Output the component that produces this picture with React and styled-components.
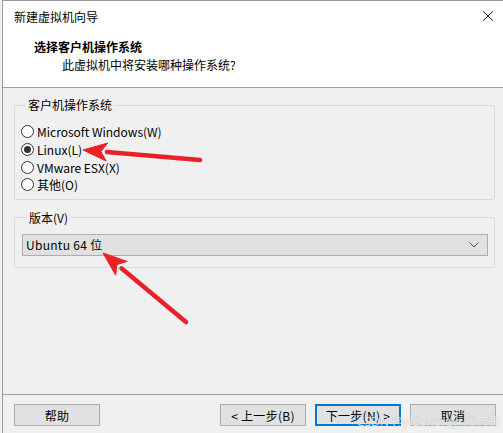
import styled, { createGlobalStyle } from 'styled-components';

const GlobalStyle = createGlobalStyle`
	html, body {
		margin: 0;
		padding: 0;
		background: #f0f0f0;
	}
	body {
		font-family: "Noto Sans CJK SC", "Noto Sans", sans-serif;
		font-size: 12px;
		color: #000;
	}
`;

const Window = styled.div`
	position: relative;
	width: 501px;
	height: 432px;
	margin-left: 2px;
	border-left: 1px solid #9a9a9a;
	border-top: 1px solid #9a9a9a;
	background: #f0f0f0;
	display: flex;
	flex-direction: column;
	overflow: hidden;
`;

const Header = styled.div`
	background: #fff;
	height: 87px;
	border-bottom: 1px solid #a0a0a0;
	display: flex;
	flex-direction: column;
	padding: 5px 0 0 11px;
	box-sizing: border-box;
`;

const TitleBar = styled.div`
	display: flex;
	justify-content: space-between;
	align-items: center;
	height: 20px;
	padding-right: 10px;
`;

const Title = styled.span`
	font-size: 12px;
`;

const Heading = styled.div`
	margin: 12px 0 0 20px;
	font-weight: bold;
	font-size: 12px;
	line-height: 18px;
`;

const Sub = styled.div`
	margin-left: 48px;
	line-height: 17px;
`;

const Body = styled.div`
	flex: 1;
	padding: 9px 9px 0 11px;
	display: flex;
	flex-direction: column;
	gap: 10px;
`;

const Group = styled.fieldset`
	margin: 0;
	border: 1px solid #dcdcdc;
	padding: ${(p) => p.$pad};
	display: flex;
	flex-direction: column;
	box-sizing: border-box;
`;

const Legend = styled.legend`
	padding: 0 2px;
	margin-left: 5px;
	line-height: 16px;
`;

const Radio = styled.label`
	display: flex;
	align-items: center;
	gap: 3px;
	height: 17.7px;
`;

const Dot = styled.span`
	width: 11px;
	height: 11px;
	border: 1px solid #333;
	border-radius: 50%;
	background: #fff;
	display: flex;
	align-items: center;
	justify-content: center;
	&::after {
		content: '';
		width: 7px;
		height: 7px;
		border-radius: 50%;
		background: ${(p) => (p.$on ? '#333' : 'transparent')};
	}
`;

const Select = styled.div`
	height: 22px;
	border: 1px solid #adadad;
	background: #e1e1e1;
	display: flex;
	align-items: center;
	justify-content: space-between;
	padding: 0 8px 0 3px;
	box-sizing: border-box;
	letter-spacing: 0.3px;
`;

const Footer = styled.div`
	height: 39px;
	border-top: 1px solid #a0a0a0;
	display: flex;
	align-items: flex-start;
	padding: 9px 8px 0 11px;
	gap: 9px;
	box-sizing: border-box;
`;

const Button = styled.div`
	width: 86px;
	height: 22px;
	box-sizing: border-box;
	border: ${(p) => (p.$primary ? '2px solid #0078d7' : '1px solid #adadad')};
	background: #e1e1e1;
	display: flex;
	align-items: center;
	justify-content: center;
	letter-spacing: 0.3px;
`;

const Spacer = styled.div`
	flex: 1;
`;

const Overlay = styled.svg`
	position: absolute;
	left: -3px;
	top: -1px;
	pointer-events: none;
`;

const Watermark = styled.div`
	position: absolute;
	right: 4px;
	bottom: 3px;
	color: rgba(255, 255, 255, 0.75);
	text-shadow: 0 0 1px rgba(0, 0, 0, 0.25);
	font-family: "Noto Sans", "Noto Sans CJK SC", sans-serif;
	font-size: 12px;
	pointer-events: none;
`;

const Arrow = ({ x1, y1, x2, y2 }) => {
	const a = Math.atan2(y2 - y1, x2 - x1);
	const len = 24;
	const w = 9;
	const bx = x2 - Math.cos(a) * len;
	const by = y2 - Math.sin(a) * len;
	const px = -Math.sin(a) * w;
	const py = Math.cos(a) * w;
	return (
		<g fill="#ea2228" stroke="#ea2228">
			<line x1={x1} y1={y1} x2={bx} y2={by} strokeWidth="4.5" strokeLinecap="round" />
			<polygon
				points={`${x2},${y2} ${bx + px},${by + py} ${bx + Math.cos(a) * 6},${by + Math.sin(a) * 6} ${bx - px},${by - py}`}
				strokeWidth="1"
				strokeLinejoin="round"
			/>
		</g>
	);
};

const CloseIcon = () => (
	<svg width="12" height="12" viewBox="0 0 12 12">
		<path d="M1 1 L11 11 M11 1 L1 11" stroke="#222" strokeWidth="1" />
	</svg>
);

const Chevron = () => (
	<svg width="10" height="6" viewBox="0 0 10 6">
		<path d="M0.5 0.5 L5 5 L9.5 0.5" stroke="#555" strokeWidth="1" fill="none" />
	</svg>
);

const options = [
	{ label: 'Microsoft Windows(W)', on: false },
	{ label: 'Linux(L)', on: true },
	{ label: 'VMware ESX(X)', on: false },
	{ label: '其他(O)', on: false },
];

export default function App() {
	return (
		<>
			<GlobalStyle />
			<Window>
				<Header>
					<TitleBar>
						<Title>新建虚拟机向导</Title>
						<CloseIcon />
					</TitleBar>
					<Heading>选择客户机操作系统</Heading>
					<Sub>此虚拟机中将安装哪种操作系统?</Sub>
				</Header>
				<Body>
					<Group $pad="10px 8px 5px 6px">
						<Legend>客户机操作系统</Legend>
						{options.map(({ label, on }) => (
							<Radio key={label}>
								<Dot $on={on} />
								{label}
							</Radio>
						))}
					</Group>
					<Group $pad="8px 6px 11px 7px">
						<Legend>版本(V)</Legend>
						<Select>
							<span>Ubuntu 64 位</span>
							<Chevron />
						</Select>
					</Group>
				</Body>
				<Footer>
					<Button>帮助</Button>
					<Spacer />
					<Button>&lt; 上一步(B)</Button>
					<Button $primary>下一步(N) &gt;</Button>
					<Button>取消</Button>
				</Footer>
				<Watermark>CSDN @yidenergy_殷志康</Watermark>
				<Overlay width="503" height="433">
					<Arrow x1={200} y1={160} x2={83} y2={150} />
					<Arrow x1={186} y1={322} x2={103} y2={253} />
				</Overlay>
			</Window>
		</>
	);
}
